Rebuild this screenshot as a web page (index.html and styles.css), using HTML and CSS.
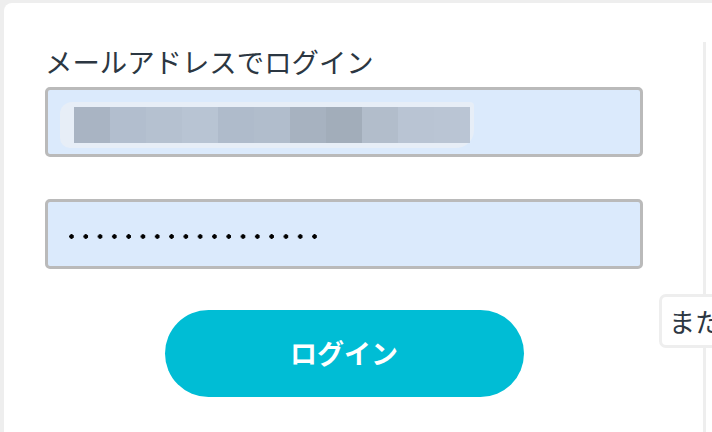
FILE: index.html
```html
<!DOCTYPE html>
<html lang="ja">
<head>
<meta charset="utf-8">
<title>ログイン</title>
<link rel="stylesheet" href="styles.css">
</head>
<body>
<div class="card">
  <form class="login-form">
    <label class="label">メールアドレスでログイン</label>
    <div class="field">
      <div class="blurred">
        <span></span><span></span><span></span><span></span><span></span><span></span><span></span><span></span><span></span><span></span><span></span>
      </div>
    </div>
    <div class="field field-pass">
      <div class="dots"></div>
    </div>
    <button type="button" class="btn">ログイン</button>
  </form>
  <div class="divider">
    <div class="or-badge">または</div>
  </div>
</div>
</body>
</html>
```
FILE: styles.css
```css
html, body {
  margin: 0;
  padding: 0;
  height: 100%;
  overflow: hidden;
}
body {
  background: #eeeeee;
  font-family: "Noto Sans CJK JP", "Noto Sans", sans-serif;
  color: #2c3742;
}
.card {
  margin: 3px 0 0 4px;
  height: 429px;
  background: #ffffff;
  border-top-left-radius: 8px;
  display: flex;
}
.login-form {
  width: 598px;
  padding: 40px 0 0 41px;
  display: flex;
  flex-direction: column;
}
.label {
  font-size: 27.4px;
  line-height: 36px;
  margin-left: 0;
  margin-bottom: 8px;
}
.field {
  box-sizing: border-box;
  height: 70px;
  border: 3px solid #bababa;
  border-radius: 5px;
  background: #dbeafc;
  display: flex;
  align-items: center;
  padding-left: 12px;
}
.field-pass {
  margin-top: 42px;
  padding-left: 21px;
}
.blurred {
  display: flex;
  height: 36px;
  padding: 5px 4px 5px 14px;
  background: #e7eef7;
  border-radius: 12px 4px 18px 10px;
  margin-top: 6px;
}
.blurred span {
  width: 36px;
  height: 36px;
  background: #b0bccb;
}
.blurred span:nth-child(1) { background: #a9b4c3; }
.blurred span:nth-child(2) { background: #b2bece; }
.blurred span:nth-child(3) { background: #b5c1d0; }
.blurred span:nth-child(4) { background: #b8c4d3; }
.blurred span:nth-child(5) { background: #afbbcb; }
.blurred span:nth-child(6) { background: #b1bdcc; }
.blurred span:nth-child(7) { background: #a7b2c0; }
.blurred span:nth-child(8) { background: #a2adba; }
.blurred span:nth-child(9) { background: #b2bdcb; }
.blurred span:nth-child(10) { background: #b9c4d3; }
.blurred span:nth-child(11) { background: #bac5d4; width: 36px; }
.dots {
  width: 257px;
  height: 5px;
  background-image: radial-gradient(circle at 2.5px 2.5px, #000 2px, transparent 2.5px);
  background-size: 14.3px 5px;
  background-repeat: repeat-x;
  margin-top: 5px;
}
.btn {
  align-self: center;
  margin-top: 41px;
  width: 359px;
  height: 87px;
  border: none;
  border-radius: 44px;
  background: #00bdd5;
  color: #ffffff;
  font-family: "Noto Sans CJK JP", "Noto Sans", sans-serif;
  font-weight: 700;
  font-size: 27px;
  padding: 0 0 3px;
  cursor: pointer;
}
.divider {
  position: relative;
  width: 3px;
  margin: 39px 0 0 60px;
  background: #eeeeee;
}
.or-badge {
  position: absolute;
  left: -44px;
  top: 252px;
  box-sizing: border-box;
  height: 54px;
  padding: 0 10px 0 7px;
  border: 3px solid #eeeeee;
  border-radius: 7px;
  background: #ffffff;
  font-size: 26px;
  line-height: 48px;
  white-space: nowrap;
}
```
